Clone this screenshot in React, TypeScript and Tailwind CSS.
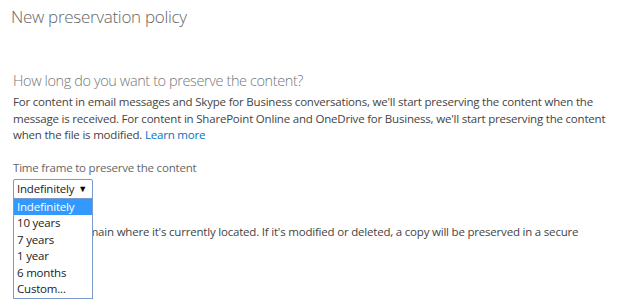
import React from "react";

const font = { fontFamily: '"Open Sans", "Noto Sans", Arial, sans-serif' };

export default function App() {
  const items = ["Indefinitely", "10 years", "7 years", "1 year", "6 months", "Custom..."];
  return (
    <div className="w-[628px] h-[307px] bg-white overflow-hidden relative" style={font}>
      <div className="pl-[11px] pt-[5px] text-[17px] font-light tracking-[-0.3px] text-[#666] leading-[24px]">
        New preservation policy
      </div>
      <div className="pl-[13px]">
        <div className="mt-[42px] text-[14.5px] font-light tracking-[-0.4px] text-[#777] leading-[20px] whitespace-nowrap">
          How long do you want to preserve the content?
        </div>
        <p className="mt-[3px] text-[11.5px] tracking-[-0.2px] text-[#444] leading-[16.5px] whitespace-nowrap">
          For content in email messages and Skype for Business conversations, we'll start preserving the content when the
          <br />
          message is received. For content in SharePoint Online and OneDrive for Business, we'll start preserving the content
          <br />
          when the file is modified. <span className="text-[#0072c6]">Learn more</span>
        </p>
        <div className="mt-[16px] text-[11.5px] tracking-[-0.2px] text-[#666] leading-[16px]">
          Time frame to preserve the content
        </div>
        <div className="relative mt-[3px] w-[80px]">
          <div className="h-[20px] border border-[#7a9acc] rounded-[2px] flex items-center justify-between pl-[3px] pr-[5px] text-[11.5px] tracking-[-0.2px] text-[#222]">
            <span>Indefinitely</span>
            <span className="text-[9px] text-black">▼</span>
          </div>
          <div className="absolute left-0 top-[19px] w-[80px] border border-[#7a9acc] bg-white z-10">
            {items.map((it, i) => (
              <div
                key={it}
                className={
                  "h-[16.6px] leading-[16.6px] pl-[3px] text-[11.5px] tracking-[-0.2px] " +
                  (i === 0 ? "bg-[#3399ff] text-white" : "text-[#222]")
                }
              >
                {it}
              </div>
            ))}
          </div>
        </div>
        <p className="mt-[25px] text-[11.5px] tracking-[-0.2px] text-[#444] leading-[16.5px] whitespace-nowrap">
          Content will remain where it's currently located. If it's modified or deleted, a copy will be preserved in a secure
        </p>
      </div>
    </div>
  );
}
